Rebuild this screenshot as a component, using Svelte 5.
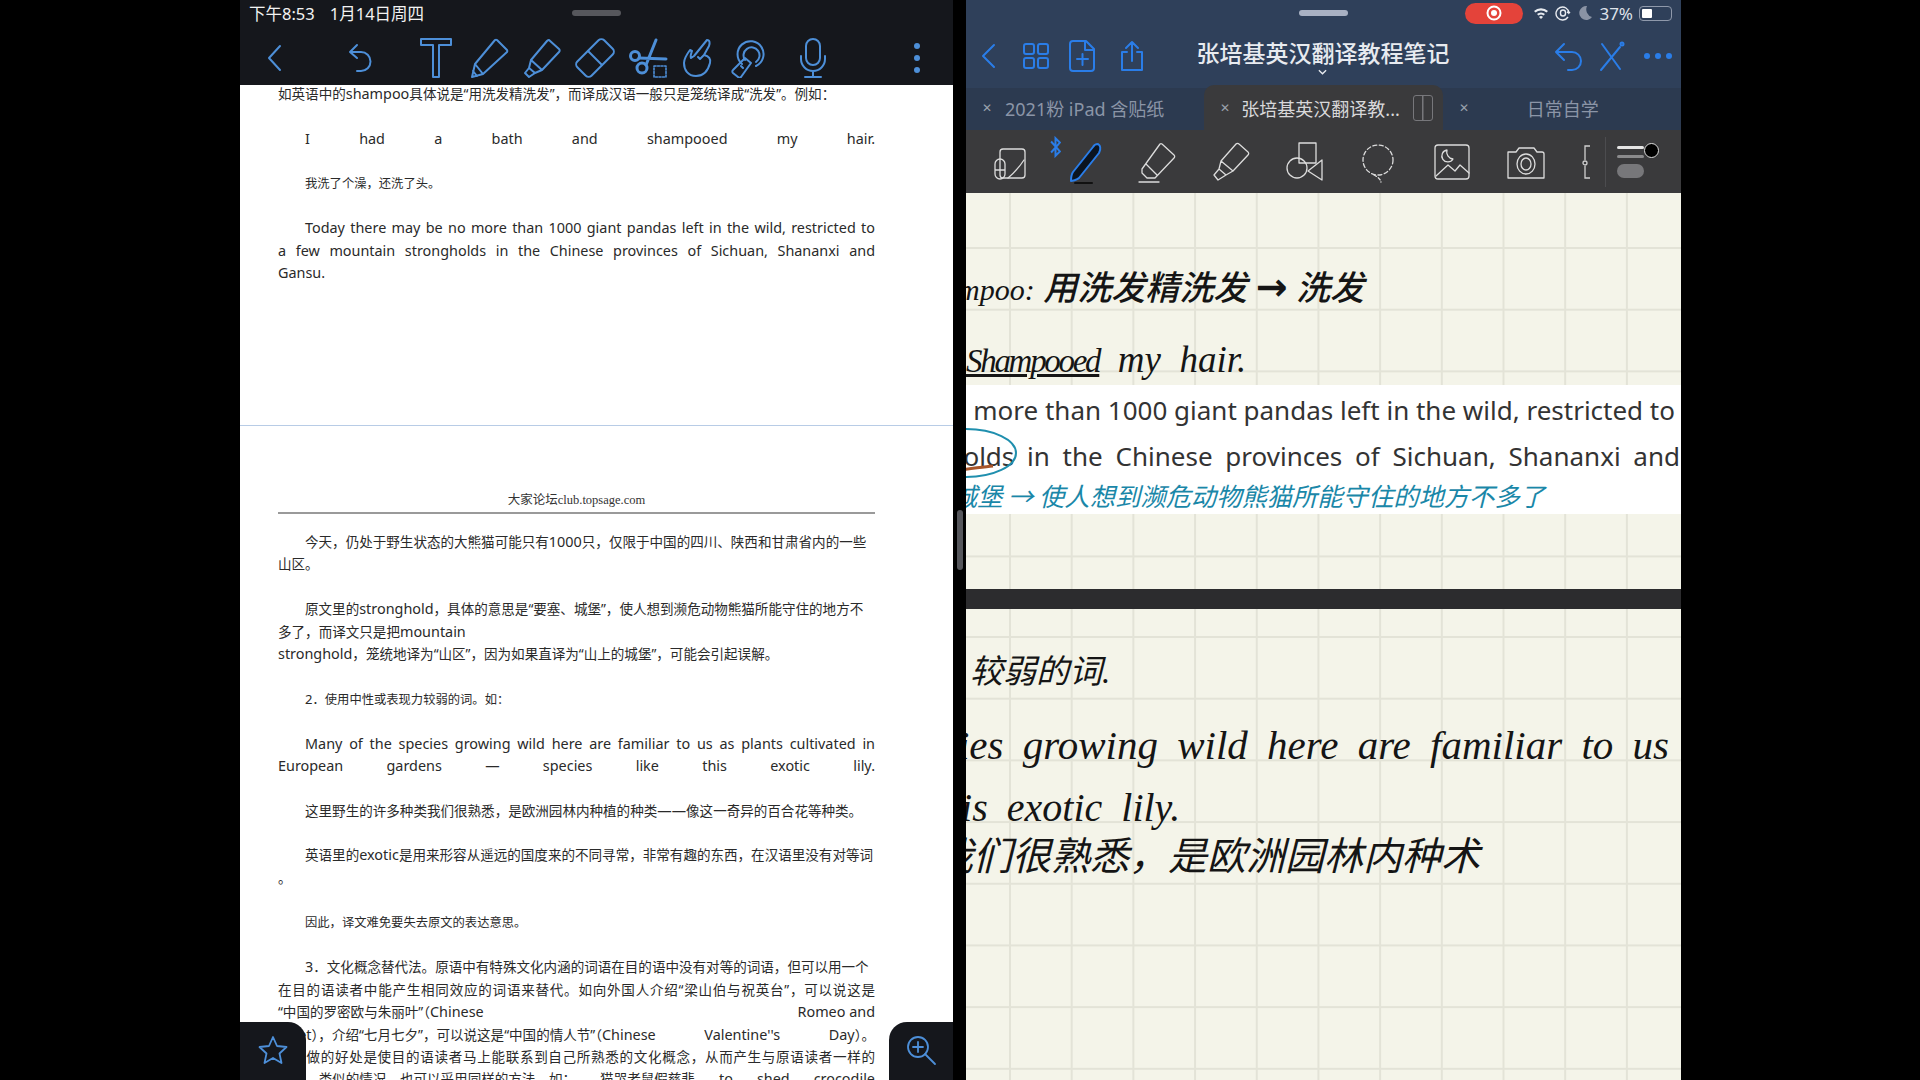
<script>
	// pdf text, one entry per rendered line. blank = one empty line of the pdf rhythm
	const pageOne = [
		{ t: "如英语中的shampoo具体说是“用洗发精洗发”，而译成汉语一般只是笼统译成“洗发”。例如：" },
		{ blank: true },
		{ t: "I had a bath and shampooed my hair.", indent: true, spread: true },
		{ blank: true },
		{ t: "我洗了个澡，还洗了头。", indent: true, small: true },
		{ blank: true },
		{ t: "Today there may be no more than 1000 giant pandas left in the wild, restricted to", indent: true, spread: true },
		{ t: "a few mountain strongholds in the Chinese provinces of Sichuan, Shananxi and", spread: true },
		{ t: "Gansu." }
	];

	const pageTwo = [
		{ t: "今天，仍处于野生状态的大熊猫可能只有1000只，仅限于中国的四川、陕西和甘肃省内的一些", indent: true },
		{ t: "山区。" },
		{ blank: true },
		{ t: "原文里的stronghold，具体的意思是“要塞、城堡”，使人想到濒危动物熊猫所能守住的地方不", indent: true },
		{ t: "多了，而译文只是把mountain" },
		{ t: "stronghold，笼统地译为“山区”，因为如果直译为“山上的城堡”，可能会引起误解。" },
		{ blank: true },
		{ t: "2．使用中性或表现力较弱的词。如：", indent: true, small: true },
		{ blank: true },
		{ t: "Many of the species growing wild here are familiar to us as plants cultivated in", indent: true, spread: true },
		{ t: "European gardens — species like this exotic lily.", spread: true },
		{ blank: true },
		{ t: "这里野生的许多种类我们很熟悉，是欧洲园林内种植的种类——像这一奇异的百合花等种类。", indent: true },
		{ blank: true },
		{ t: "英语里的exotic是用来形容从遥远的国度来的不同寻常，非常有趣的东西，在汉语里没有对等词", indent: true },
		{ t: "。" },
		{ blank: true },
		{ t: "因此，译文难免要失去原文的表达意思。", indent: true, small: true },
		{ blank: true },
		{ t: "3．文化概念替代法。原语中有特殊文化内涵的词语在目的语中没有对等的词语，但可以用一个", indent: true },
		{ t: "在目的语读者中能产生相同效应的词语来替代。如向外国人介绍“梁山伯与祝英台”，可以说这是", spread: true },
		{ parts: ["“中国的罗密欧与朱丽叶”（Chinese", "Romeo and"] },
		{ parts: ["Juliet），介绍“七月七夕”，可以说这是“中国的情人节”（Chinese", "Valentine''s", "Day）。"] },
		{ t: "这样做的好处是使目的语读者马上能联系到自己所熟悉的文化概念，从而产生与原语读者一样的", spread: true },
		{ parts: ["感受。类似的情况，也可以采用同样的方法，如：", "猫哭老鼠假慈悲", "to", "shed", "crocodile"] }
	];

	const tabs = [
		{ name: "2021粉 iPad 含贴纸" },
		{ name: "张培基英汉翻译教...", active: true },
		{ name: "日常自学", center: true }
	];

	// latin runs are set a little larger than the chinese in this pdf
	function seg(t) {
		return t.split(/([\x20-\x7e—]+)/).filter(Boolean).map(s => {
			return { s, lat: /^[\x20-\x7e—]/.test(s) };
		});
	}
</script>

{#snippet runs(t)}{#each seg(t) as r}<span class:lat={r.lat}>{r.s}</span>{/each}{/snippet}

{#snippet lines(list)}
	{#each list as l}
		{#if l.blank}
			<div class="ln"></div>
		{:else if l.parts}
			<div class="ln parts">
				{#each l.parts as p}<span>{@render runs(p)}</span>{/each}
			</div>
		{:else}
			<div class="ln" class:indent={l.indent} class:spread={l.spread} class:small={l.small}>{@render runs(l.t)}</div>
		{/if}
	{/each}
{/snippet}

<div class="screen">
	<section class="reader">
		<div class="status-l">
			<span class="clock">下午8:53</span>
			<span>1月14日周四</span>
			<i class="grab dark"></i>
		</div>
		<nav class="tools-l">
			<svg class="ic back-l" viewBox="0 0 40 40"><path d="M25 8 14 20l11 12" /></svg>
			<svg class="ic undo-l" viewBox="0 0 40 40"><path d="M17 7l-7 7 7 6M10 14h11a9 9 0 0 1 0 19h-4" /></svg>
			<svg class="ic" viewBox="0 0 40 40"><path d="M5 1h30v6H23v32h-6V7H5z" /></svg>
			<svg class="ic" viewBox="0 0 40 40"><path d="M28 2l10 10a2 2 0 0 1 0 2L14 36 3 39l3-13L26 2a2 2 0 0 1 2 0zM6 26l8 10M4 33l4 5" /></svg>
			<svg class="ic" viewBox="0 0 40 40"><path d="M27 2l10 9a2 2 0 0 1 0 3L20 32 9 22 25 3a2 2 0 0 1 2-1zM9 22l-2 8 6 5 7-3M7 30l-4 5 4 4 6-4" /></svg>
			<svg class="ic" viewBox="0 0 40 40"><rect x="10" y="1" width="20" height="38" rx="4" transform="rotate(45 20 20)" /><path d="M13 13l14 14" /></svg>
			<svg class="ic" viewBox="0 0 40 40">
				<circle cx="7" cy="18" r="4.500" stroke-width="3" /><circle cx="14" cy="30" r="5" stroke-width="3" />
				<path stroke-width="3" d="M11 20 38 21M18 27 28 2" />
				<rect x="26" y="28" width="12" height="11" stroke-width="1.600" stroke-dasharray="2 1.500" />
			</svg>
			<svg class="ic pull" viewBox="0 0 40 40"><path d="M29 2c3 0 3 3 2 6l-5 9c5 1 7 4 6 8-2 8-7 13-14 13-8 0-12-6-12-13 0-5 3-9 6-13l2 1c-1 3-2 5-1 7l3-2zM26 17l-4 4M22 21l-2-2" /></svg>
			<svg class="ic pull" viewBox="0 0 40 40"><path d="M14 26a13 13 0 1 1 14 2M17 22a8 8 0 1 1 11 2" /><path d="M17 20l6 5-10 14a2 2 0 0 1-3 0l-5-4a2 2 0 0 1 0-3zM13 28l2 2" /></svg>
			<svg class="ic mic" viewBox="0 0 40 40"><rect x="13" y="1" width="14" height="26" rx="7" /><path d="M8 18v3a12 12 0 0 0 24 0v-3M20 33v6M12 39h16" /></svg>
			<svg class="ic dots-l" viewBox="0 0 40 40"><circle cx="20" cy="8" r="3" /><circle cx="20" cy="20" r="3" /><circle cx="20" cy="32" r="3" /></svg>
		</nav>
		<div class="doc">
			<div class="page first">{@render lines(pageOne)}</div>
			<div class="page second">
				<div class="running">大家论坛club.topsage.com</div>
				{@render lines(pageTwo)}
			</div>
		</div>
		<button class="corner star" aria-label="收藏">
			<svg viewBox="0 0 32 32"><path d="M16 3l4 9 9.500 1-7 6.500 2 9.500-8.500-5-8.500 5 2-9.500-7-6.500 9.500-1z" /></svg>
		</button>
		<button class="corner zoom" aria-label="放大">
			<svg viewBox="0 0 32 32"><circle cx="13" cy="13" r="10" /><path d="M8 13h10M13 8v10M20 20l10 10" /></svg>
		</button>
	</section>

	<div class="split"><i></i></div>

	<section class="notes">
		<div class="status-r">
			<i class="grab light"></i>
			<span class="rec"><svg viewBox="0 0 16 16"><circle cx="8" cy="8" r="6.500" /><circle class="dot" cx="8" cy="8" r="3" /></svg></span>
			<svg class="st" viewBox="0 0 16 16"><path d="M1 6a10 10 0 0 1 14 0l-1.500 1.600a8 8 0 0 0-11 0zM4 9a6 6 0 0 1 8 0l-1.500 1.600a4 4 0 0 0-5 0zM8 14l-2-2a3 3 0 0 1 4 0z" /></svg>
			<svg class="st lock" viewBox="0 0 16 16"><path d="M13 12a6.500 6.500 0 1 1 1-4l1-1M14 8l-2-1" /><rect x="5.500" y="5" width="5" height="6" rx="2.500" /></svg>
			<svg class="st moon" viewBox="0 0 16 16"><path d="M10 1a7 7 0 1 0 5 11A8 8 0 0 1 10 1z" /></svg>
			<span class="pct">37%</span>
			<span class="batt"><b></b></span>
		</div>
		<header class="title-r">
			<svg class="hd" viewBox="0 0 32 32"><path d="M21 5 10 16l11 11" /></svg>
			<svg class="hd" viewBox="0 0 32 32"><rect x="4" y="4" width="10" height="10" rx="2" /><rect x="18" y="4" width="10" height="10" rx="2" /><rect x="4" y="18" width="10" height="10" rx="2" /><rect x="18" y="18" width="10" height="10" rx="2" /></svg>
			<svg class="hd" viewBox="0 0 32 32"><path d="M6 1h13l8 8v19a3 3 0 0 1-3 3H6a3 3 0 0 1-3-3V4a3 3 0 0 1 3-3zM18 1v9h9M10 19h11M15.500 14v11" /></svg>
			<svg class="hd share" viewBox="0 0 32 32"><path d="M11 12H6v18h20V12h-5M16 21V2M10 8l6-6 6 6" /></svg>
			<div class="doc-name">张培基英汉翻译教程笔记<svg viewBox="0 0 10 6"><path d="M1 1l4 4 4-4" /></svg></div>
			<svg class="hd undo-r" viewBox="0 0 32 32"><path d="M11 4 3 12l8 8M3 12h16a9 9 0 0 1 0 18h-4" /></svg>
			<svg class="hd" viewBox="0 0 32 32"><path d="M7 4l18 25M25 7 6 30" /><circle cx="27" cy="4" r="1.500" /></svg>
			<svg class="hd" viewBox="0 0 32 32"><circle class="fill" cx="5" cy="16" r="3" /><circle class="fill" cx="16" cy="16" r="3" /><circle class="fill" cx="27" cy="16" r="3" /></svg>
		</header>
		<div class="tabs">
			{#each tabs as tab}
				<div class="tab" class:active={tab.active} class:center={tab.center}>
					<span class="x">✕</span>
					<span class="tname">{tab.name}</span>
					{#if tab.active}<i class="splitview"></i>{/if}
				</div>
			{/each}
		</div>
		<div class="tools-r">
			<svg class="tl" viewBox="0 0 44 44"><rect x="12" y="9" width="25" height="29" rx="3" /><path d="M20 38c6-5 12-12 16-18M7 24a5 5 0 0 1 10 0v10a5 5 0 0 1-10 0zM7 30h10" /></svg>
			<svg class="tl" viewBox="0 0 44 44"><path class="pen" d="M36 4c3 2 3 5 1 9L17 38c-2 2-7 3-8 3 0-2 0-6 2-9L31 7c1-2 3-3 5-3z" /><path d="M13 43h17" stroke="#111" stroke-width="2" /></svg>
			<svg class="tl" viewBox="0 0 44 44"><path d="M27 4l12 11a2 2 0 0 1 0 3L20 38H12L7 33v-4L25 4a2 2 0 0 1 2 0zM11 24l11 11M4 42h20" /></svg>
			<svg class="tl" viewBox="0 0 44 44"><path d="M30 4l9 8a2 2 0 0 1 0 3L24 31l-12-10L27 4a2 2 0 0 1 3 0zM12 21l-2 8 7 6 7-4M10 29l-5 6 4 5 8-5" /></svg>
			<svg class="tl" viewBox="0 0 44 44"><rect x="16" y="3" width="17" height="20" /><circle cx="14" cy="28" r="10" /><path d="M39 20v20L25 31z" /></svg>
			<svg class="tl" viewBox="0 0 44 44"><circle cx="22" cy="20" r="15" stroke-dasharray="4 2.500" /><path d="M18 35c2 1 6 3 7 7" stroke-dasharray="3 2" /></svg>
			<svg class="tl" viewBox="0 0 44 44"><rect x="5" y="5" width="34" height="34" rx="3" /><path d="M17 10a6 6 0 1 0 6 9 7 7 0 0 1-6-9zM6 36l12-11 7 6 5-6 9 8" /></svg>
			<svg class="tl" viewBox="0 0 44 44"><path d="M4 12h8l3-4h15l3 4h5a2 2 0 0 1 2 2v24H4z" /><ellipse cx="22" cy="24" rx="9" ry="10" /><ellipse cx="22" cy="24" rx="5" ry="6" /></svg>
			<svg class="bracket" viewBox="0 0 12 44"><path d="M9 6H4v14M4 26v12h5" /><circle cx="4" cy="23" r="2" /></svg>
			<i class="sep"></i>
			<div class="pen-size">
				<i class="w1"></i><i class="w2"></i><i class="w3"></i><b></b>
			</div>
			<svg class="bt" viewBox="0 0 10 20"><path d="M1 5l8 9-4 4V2l4 4-8 9" /></svg>
		</div>
		<div class="paper">
			<div class="sheet one">
				<span class="script line-a"><em>mpoo:</em> 用洗发精洗发 <b>→</b> 洗发</span>
				<span class="script line-b"><u>Shampooed</u> &nbsp;my &nbsp;hair.</span>
				<div class="clip">
					<p>no more than 1000 giant pandas left in the wild, restricted to</p>
					<p class="tight">strongholds in the Chinese provinces of Sichuan, Shananxi and</p>
					<span class="teal">城堡 → 使人想到濒危动物熊猫所能守住的地方不多了</span>
					<svg class="mark" viewBox="0 0 60 60"><ellipse cx="8" cy="28" rx="50" ry="24" /><path class="red" d="M0 45c12-1 24-3 35-4" /></svg>
				</div>
			</div>
			<div class="sheet two">
				<span class="script line-c">较弱的词.</span>
				<span class="script line-d">species growing wild here are familiar to us</span>
				<span class="script line-e">this exotic lily.</span>
				<span class="script line-f">我们很熟悉，是欧洲园林内种术</span>
			</div>
		</div>
	</section>
</div>

<style>
:global(body) {
	margin: 0;
	background: #000;
}

.screen {
	display: flex;
	width: 1920px;
	height: 1080px;
	padding-left: 240px;
	box-sizing: border-box;
	overflow: hidden;
	font-family: "Noto Sans", "Noto Sans CJK SC", sans-serif;
}

.reader {
	position: relative;
	width: 713px;
	height: 1080px;
	display: flex;
	flex-direction: column;
	background: #fff;
	overflow: hidden;
}

.status-l {
	position: relative;
	height: 30px;
	box-sizing: border-box;
	padding: 0 0 5px 9px;
	display: flex;
	align-items: center;
	gap: 15px;
	background: #15171c;
	color: #f2f2f2;
	font-size: 16.500px;
}

.grab {
	position: absolute;
	top: 10px;
	width: 49px;
	height: 6px;
	border-radius: 3px;
}

.grab.dark {
	left: 332px;
	background: #56575c;
}

.tools-l {
	height: 55px;
	padding: 0 16px 0 15px;
	display: flex;
	align-items: center;
	gap: 13px;
	background: #15171c;
	box-sizing: border-box;
}

.ic {
	width: 40px;
	height: 40px;
	flex: none;
	fill: none;
	stroke: #4d8fd8;
	stroke-width: 2;
	stroke-linejoin: round;
	stroke-linecap: round;
}

.back-l { margin-right: 32px; }
.undo-l { margin-right: 23px; }
.pull { margin-left: -3px; }
.mic { margin-left: 12px; }
.dots-l { margin-left: auto; }
.dots-l circle { fill: #4d8fd8; stroke: none; }

.doc {
	flex: 1;
	overflow: hidden;
	color: #2a2a2a;
	font-size: 13.550px;
}

.page {
	padding: 0 78px 0 38px;
}

.first {
	height: 343px;
	box-sizing: border-box;
	margin-top: -2px;
	border-bottom: 1px solid #b8cce6;
}

.second {
	padding-top: 64px;
}

.running {
	height: 20px;
	line-height: 20px;
	margin-bottom: 17px;
	border-bottom: 2px solid #9a9a9a;
	padding-bottom: 2px;
	text-align: center;
	font-family: "Liberation Serif", "Noto Sans CJK SC", serif;
	font-size: 12.500px;
	color: #333;
}

.ln {
	height: 22.400px;
	line-height: 22.400px;
	white-space: nowrap;
}

.lat { font-size: 1.063em; }
.indent { padding-left: 27px; }
.small { font-size: 12.300px; }

.spread {
	white-space: normal;
	text-align: justify;
	text-align-last: justify;
}

.parts {
	display: flex;
	justify-content: space-between;
}

.corner {
	position: absolute;
	bottom: 0;
	height: 58px;
	padding: 0;
	border: 0;
	background: #15171c;
}

.corner svg {
	width: 32px;
	height: 32px;
	fill: none;
	stroke: #4d8fd8;
	stroke-width: 1.800;
	stroke-linejoin: round;
	stroke-linecap: round;
}

.star {
	left: 0;
	width: 66px;
	border-top-right-radius: 18px;
}

.zoom {
	right: 0;
	width: 64px;
	border-top-left-radius: 18px;
}

.split {
	width: 13px;
	display: flex;
	align-items: center;
	justify-content: center;
}

.split i {
	width: 6px;
	height: 60px;
	border-radius: 3px;
	background: #55565b;
}

.notes {
	width: 715px;
	height: 1080px;
	display: flex;
	flex-direction: column;
	overflow: hidden;
}

.status-r {
	position: relative;
	height: 26px;
	display: flex;
	align-items: center;
	justify-content: flex-end;
	gap: 6px;
	padding-right: 9px;
	background: #2f405a;
	color: #dfe3ea;
	font-size: 17px;
}

.grab.light {
	left: 333px;
	background: #a9b1c3;
}

.rec {
	width: 58px;
	height: 21px;
	margin-right: 4px;
	border-radius: 11px;
	background: #e4433a;
	display: flex;
	align-items: center;
	justify-content: center;
}

.rec svg {
	width: 16px;
	height: 16px;
	fill: none;
	stroke: #fff;
	stroke-width: 2;
}

.rec .dot {
	fill: #fff;
	stroke: none;
}

.st {
	width: 16px;
	height: 16px;
	fill: #e8ebf0;
}

.lock {
	fill: none;
	stroke: #e8ebf0;
	stroke-width: 1.400;
}

.moon { fill: #8a93a4; }

.batt {
	width: 33px;
	height: 15px;
	box-sizing: border-box;
	padding: 2px;
	border: 1px solid #8f99ab;
	border-radius: 4px;
}

.batt b {
	display: block;
	width: 10px;
	height: 100%;
	border-radius: 1px;
	background: #fff;
}

.title-r {
	height: 59px;
	display: flex;
	align-items: center;
	gap: 15px;
	padding: 0 7px;
	background: #2f405a;
	box-sizing: border-box;
}

.hd {
	width: 32px;
	height: 32px;
	flex: none;
	fill: none;
	stroke: #2a7de8;
	stroke-width: 2;
	stroke-linecap: round;
	stroke-linejoin: round;
}

.hd .fill {
	fill: #2a7de8;
	stroke: none;
}

.share { margin-left: 2px; }
.undo-r { margin: 0 -5px 0 5px; }

.doc-name {
	flex: 1;
	position: relative;
	top: -4px;
	padding-right: 50px;
	text-align: center;
	font-size: 23px;
	font-weight: 500;
	color: #e8ebf0;
	font-family: "Noto Sans CJK SC", sans-serif;
}

.doc-name svg {
	position: absolute;
	left: 50%;
	top: 34px;
	width: 9px;
	height: 6px;
	margin-left: -30px;
	fill: none;
	stroke: #e8ebf0;
	stroke-width: 1.500;
}

.tabs {
	height: 45px;
	display: grid;
	grid-template-columns: 1fr 1fr 1fr;
	background: linear-gradient(#2f405a 3px, #2c3a50 3px);
	font-size: 18px;
	color: #8b95a7;
}

.tab {
	display: flex;
	align-items: center;
	padding-left: 16px;
	gap: 13px;
}

.tab.active {
	background: #3a3a3c;
	border-radius: 10px 10px 0 0;
	color: #d8d8da;
	gap: 11px;
}

.tab.center .tname {
	margin-left: 45px;
}

.x {
	font-size: 12px;
	color: #9aa1ad;
}

.splitview {
	width: 20px;
	height: 26px;
	margin-left: 2px;
	box-sizing: border-box;
	border: 1.500px solid #77777b;
	border-radius: 3px;
	background: linear-gradient(#77777b, #77777b) center / 1.500px 100% no-repeat;
}

.tools-r {
	position: relative;
	height: 63px;
	padding-left: 7px;
	display: flex;
	align-items: center;
	background: #3a3a3c;
}

.tl {
	width: 44px;
	height: 44px;
	flex: none;
	margin: 0 14.850px;
	fill: none;
	stroke: #dcdcdc;
	stroke-width: 1.300;
	stroke-linejoin: round;
	stroke-linecap: round;
}

.tl .pen {
	fill: #0b1420;
	stroke: #2a7de8;
	stroke-width: 2;
}

.bracket {
	width: 12px;
	height: 44px;
	margin-left: 18px;
	fill: none;
	stroke: #cfcfcf;
	stroke-width: 1.300;
}

.sep {
	width: 1px;
	height: 50px;
	margin-left: 12px;
	background: #4c4c4f;
}

.pen-size {
	position: relative;
	width: 44px;
	margin-left: 11px;
	display: flex;
	flex-direction: column;
	gap: 6px;
}

.pen-size i { display: block; border-radius: 7px; }
.w1 { width: 27px; height: 3px; background: #e4e4e4; }
.w2 { width: 27px; height: 3px; background: #8a8a8c; }
.w3 { width: 27px; height: 14px; background: #77777a; }

.pen-size b {
	position: absolute;
	left: 27px;
	top: -3px;
	width: 13px;
	height: 13px;
	border: 1px solid #ddd;
	border-radius: 50%;
	background: #000;
}

.bt {
	position: absolute;
	left: 84px;
	top: 6px;
	width: 11px;
	height: 22px;
	fill: none;
	stroke: #2a7de8;
	stroke-width: 1.800;
}

.paper {
	flex: 1;
	display: flex;
	flex-direction: column;
	gap: 20px;
	background: #2c2c2e;
}

.sheet {
	position: relative;
	overflow: hidden;
	background-color: #f4f4e9;
	background-image:
		linear-gradient(90deg, #e3e3d7 2px, transparent 2px),
		linear-gradient(#e3e3d7 2px, transparent 2px);
	background-size: 61.700px 61.700px;
}

.one {
	height: 396px;
	background-position: 43px 0, 0 54px;
}

.two {
	flex: 1;
	background-position: 43px 0, 0 27px;
}

/* handwriting on the note canvas */
.script {
	position: absolute;
	white-space: nowrap;
	color: #151515;
	font-family: "Liberation Serif", "Noto Sans CJK SC", serif;
	font-style: italic;
}

.line-a { left: -8px; top: 73px; font-size: 34px; line-height: 46px; font-weight: 500; }
.line-a em { font-size: 30px; }
.line-a b { font-family: "DejaVu Sans", sans-serif; font-style: normal; font-size: 38px; line-height: 30px; }
.line-b { left: 0; top: 142px; font-size: 37px; line-height: 50px; }
.line-b u { font-size: 33px; letter-spacing: -2.300px; }
.line-c { left: 4px; top: 41px; font-size: 33px; line-height: 44px; }
.line-d { right: 12px; top: 110px; font-size: 41px; line-height: 52px; word-spacing: 9px; }
.line-e { left: -36px; top: 175px; font-size: 40px; line-height: 48px; word-spacing: 9px; }
.line-f { left: -32px; top: 224px; font-size: 39px; line-height: 48px; }

.clip {
	position: absolute;
	left: 0;
	right: 0;
	top: 192px;
	height: 129px;
	box-sizing: border-box;
	padding-top: 2px;
	background: #fff;
	overflow: hidden;
	color: #333;
	font-size: 26px;
}

.clip p {
	margin: 0;
	height: 46px;
	line-height: 46px;
	padding-right: 6px;
	display: flex;
	justify-content: flex-end;
	white-space: nowrap;
}

.clip .tight {
	padding-right: 1px;
	word-spacing: 6px;
}

.teal {
	position: absolute;
	right: 136px;
	top: 93px;
	white-space: nowrap;
	font-family: "Noto Sans CJK SC", sans-serif;
	font-style: italic;
	font-size: 25.300px;
	line-height: 34px;
	color: #1a87a8;
}

.mark {
	position: absolute;
	left: -8px;
	top: 40px;
	width: 60px;
	height: 60px;
	fill: none;
	stroke: #1f8fae;
	stroke-width: 2;
	overflow: visible;
}

.mark .red {
	stroke: #a8552a;
	stroke-width: 3;
}
</style>
